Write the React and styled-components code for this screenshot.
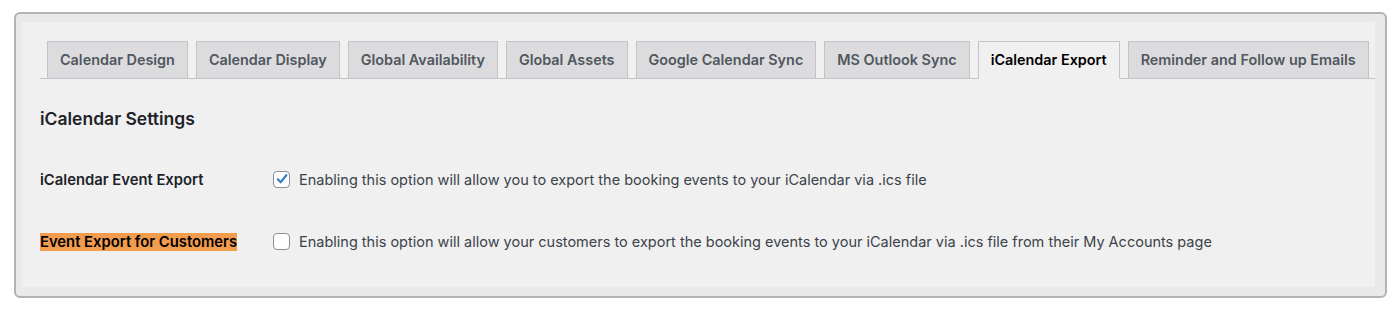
import React from "react";
import styled, { createGlobalStyle } from "styled-components";

const GlobalStyle = createGlobalStyle`
  body {
    margin: 0;
    background: #ffffff;
    font-family: Inter, "Noto Sans", sans-serif;
  }
`;

const tabs = [
  "Calendar Design",
  "Calendar Display",
  "Global Availability",
  "Global Assets",
  "Google Calendar Sync",
  "MS Outlook Sync",
  "iCalendar Export",
  "Reminder and Follow up Emails",
];

const settings = [
  {
    label: "iCalendar Event Export",
    text: "Enabling this option will allow you to export the booking events to your iCalendar via .ics file",
    checked: true,
  },
  {
    label: "Event Export for Customers",
    text: "Enabling this option will allow your customers to export the booking events to your iCalendar via .ics file from their My Accounts page",
    highlight: true,
  },
];

const App = () => {
  return (
    <>
      <GlobalStyle />
      <Frame>
        <Panel>
          <TabBar>
            {tabs.map((tab) => (
              <Tab key={tab} $active={tab === "iCalendar Export"}>
                {tab}
              </Tab>
            ))}
          </TabBar>
          <Heading>iCalendar Settings</Heading>
          <Rows>
            {settings.map((row) => (
              <Row key={row.label}>
                <LabelCell>
                  <Label $highlight={row.highlight}>{row.label}</Label>
                </LabelCell>
                <Option>
                  <Box>
                    {row.checked && (
                      <svg width="14" height="14" viewBox="0 0 14 14">
                        <path
                          d="M2.8 7.2 L5.7 10.3 L11.3 3.2"
                          fill="none"
                          stroke="#3582c4"
                          strokeWidth="2.2"
                          strokeLinecap="round"
                          strokeLinejoin="round"
                        />
                      </svg>
                    )}
                  </Box>
                  <Description>{row.text}</Description>
                </Option>
              </Row>
            ))}
          </Rows>
        </Panel>
      </Frame>
    </>
  );
};

const Frame = styled.div`
  margin: 12px 13px 0 14px;
  height: 286px;
  box-sizing: border-box;
  border: 2px solid #b3b3b3;
  border-radius: 6px;
  background: #e9e9e9;
  padding: 8px 10px 9px 6px;
`;

const Panel = styled.div`
  height: 100%;
  background: #f0f0f1;
  padding: 19px 0 0 18px;
  box-sizing: border-box;
`;

const TabBar = styled.div`
  display: flex;
  gap: 8px;
  padding-left: 7px;
  border-bottom: 1px solid #c3c4c7;
`;

const Tab = styled.div`
  padding: 0 12px;
  height: 36px;
  line-height: 36px;
  margin-bottom: -1px;
  font-size: 14.4px;
  font-weight: 600;
  white-space: nowrap;
  color: ${(p) => (p.$active ? "#000000" : "#50575e")};
  background: ${(p) => (p.$active ? "#f0f0f1" : "#dcdcde")};
  border: 1px solid #c3c4c7;
  border-bottom-color: ${(p) => (p.$active ? "#f0f0f1" : "#c3c4c7")};
`;

const Heading = styled.h2`
  margin: 30px 0 0;
  font-size: 17.5px;
  font-weight: 600;
  line-height: 20px;
  color: #1d2327;
`;

const Rows = styled.div`
  margin-top: 19px;
`;

const Row = styled.div`
  display: flex;
  align-items: center;
  height: 62px;
`;

const LabelCell = styled.div`
  width: 233px;
  flex-shrink: 0;
`;

const Label = styled.span`
  font-size: 14.8px;
  font-weight: 600;
  line-height: 18px;
  display: inline-block;
  color: ${(p) => (p.$highlight ? "#000000" : "#1d2327")};
  background: ${(p) => (p.$highlight ? "#f39c4d" : "transparent")};
`;

const Option = styled.div`
  display: flex;
  align-items: center;
  gap: 9px;
`;

const Box = styled.div`
  width: 17px;
  height: 17px;
  box-sizing: border-box;
  border: 1px solid #8c8f94;
  border-radius: 4px;
  background: #ffffff;
  display: flex;
  align-items: center;
  justify-content: center;
`;

const Description = styled.div`
  font-size: 14.5px;
  color: #3c434a;
  white-space: nowrap;
`;

export default App;
